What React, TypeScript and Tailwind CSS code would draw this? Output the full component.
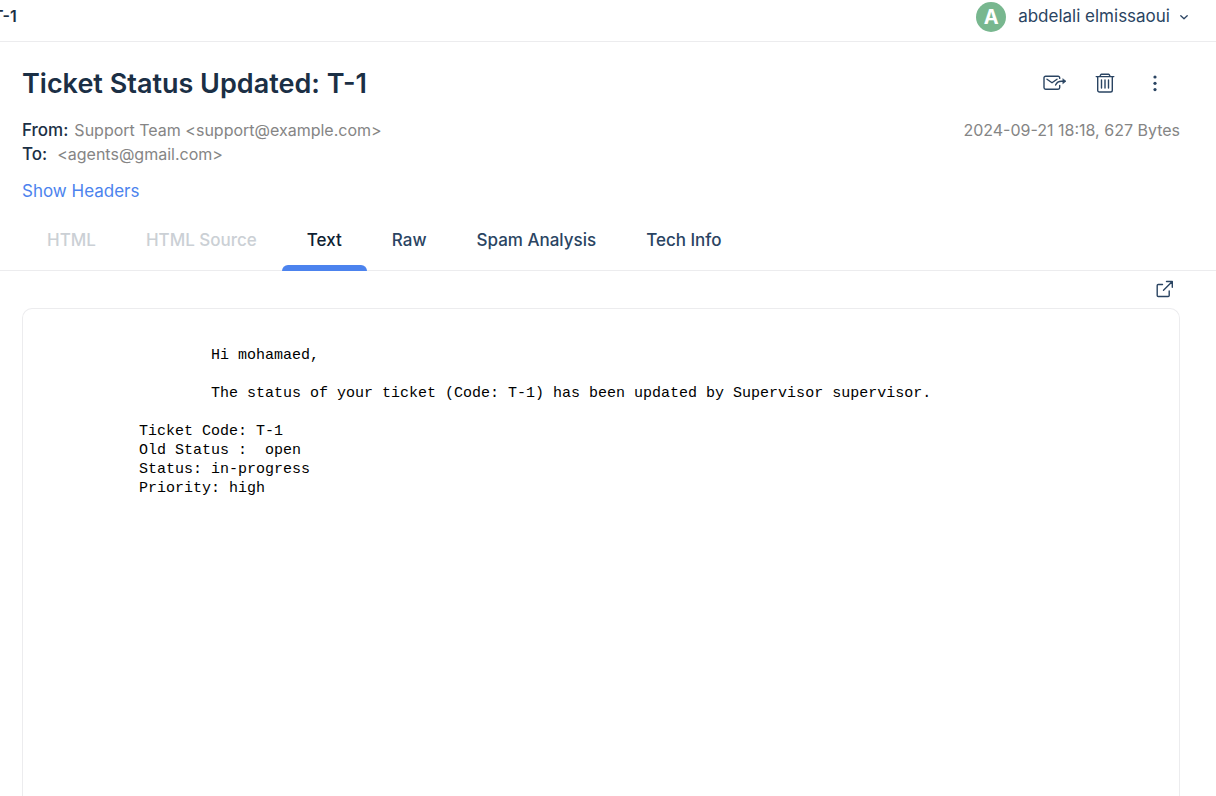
import type { ReactNode } from "react";

const tabs = [
  { name: "HTML", disabled: true },
  { name: "HTML Source", disabled: true },
  { name: "Text", active: true },
  { name: "Raw" },
  { name: "Spam Analysis" },
  { name: "Tech Info" },
];

const body = `
                    Hi mohamaed,

                    The status of your ticket (Code: T-1) has been updated by Supervisor supervisor.

            Ticket Code: T-1
            Old Status :  open
            Status: in-progress
            Priority: high
`;

function IconButton({ label, children }: { label: string; children: ReactNode }) {
  return (
    <button type="button" aria-label={label} className="flex items-center justify-center text-[#2a4462]">
      {children}
    </button>
  );
}

function ForwardIcon() {
  return (
    <svg width="24" height="16" viewBox="0 0 24 16" fill="none" stroke="currentColor" strokeWidth="1.4" strokeLinecap="round" strokeLinejoin="round">
      <path d="M16.7 3.4v-.6a1.6 1.6 0 0 0-1.6-1.6H2.6A1.6 1.6 0 0 0 1 2.8v9.8a1.6 1.6 0 0 0 1.6 1.6h12.5a1.6 1.6 0 0 0 1.6-1.6v-2.2" />
      <path d="M4 4.2 9 7.8l5-3.6" />
      <path d="M12.6 10c1-2.6 2.9-3.8 6-3.8h3" />
      <path d="m20 3.9 3 2.3-3 2.3z" fill="currentColor" strokeWidth="0.6" />
    </svg>
  );
}

function TrashIcon() {
  return (
    <svg width="20" height="20" viewBox="0 0 20 20" fill="none" stroke="currentColor" strokeWidth="1.4" strokeLinecap="round" strokeLinejoin="round">
      <path d="M1.2 3.6h17.6" />
      <path d="M5 3.2 5.8 1.6a.8.8 0 0 1 .7-.4h7a.8.8 0 0 1 .7.4l.8 1.6" />
      <path d="M2.7 3.6v13.6a1.8 1.8 0 0 0 1.8 1.8h11a1.8 1.8 0 0 0 1.8-1.8V3.6" />
      <path d="M6.5 7v8M10 7v8M13.5 7v8" />
    </svg>
  );
}

function MoreIcon() {
  return (
    <svg width="4" height="18" viewBox="0 0 4 18" fill="currentColor">
      <circle cx="2" cy="3" r="1.6" />
      <circle cx="2" cy="9.3" r="1.6" />
      <circle cx="2" cy="15.6" r="1.6" />
    </svg>
  );
}

function ExternalIcon() {
  return (
    <svg width="18" height="18" viewBox="0 0 18 18" fill="none" stroke="currentColor" strokeWidth="1.4" strokeLinecap="round" strokeLinejoin="round">
      <path d="M6.5 4.5H2.2a1 1 0 0 0-1 1v10a1 1 0 0 0 1 1h10a1 1 0 0 0 1-1V11" />
      <path d="M7.5 10.2 16 1.7M10.5 1.5h5.8v5.8" />
    </svg>
  );
}

export default function App() {
  return (
    <div className="flex h-screen flex-col overflow-hidden bg-white font-['Inter',sans-serif] text-[#1b2f45]">
      <header className="flex h-[42px] shrink-0 items-start justify-between border-b border-[#ececee] pr-7">
        <span className="-ml-[7px] pt-1 text-base font-semibold">T-1</span>
        <button type="button" className="flex items-center gap-3 pt-0.5 text-[#2a4462]">
          <span className="flex size-[30px] items-center justify-center rounded-full bg-[#78b78f] text-xl font-bold text-white">A</span>
          <span className="pb-0.5 text-[17px] leading-6">abdelali elmissaoui</span>
          <svg className="-ml-0.5" width="8" height="5" viewBox="0 0 8 5" fill="none" stroke="currentColor" strokeWidth="1.3" strokeLinecap="round" strokeLinejoin="round">
            <path d="m.8.8 3.2 3 3.2-3" />
          </svg>
        </button>
      </header>

      <section className="shrink-0 pr-9 pl-[22px]">
        <div className="flex items-center justify-between pt-6">
          <h1 className="text-[27px] leading-9 font-semibold">Ticket Status Updated: T-1</h1>
          <div className="flex items-center gap-7 pr-[23px] pb-0.5">
            <IconButton label="Forward"><ForwardIcon /></IconButton>
            <IconButton label="Delete"><TrashIcon /></IconButton>
            <span className="pl-2.5"><IconButton label="More"><MoreIcon /></IconButton></span>
          </div>
        </div>
        <div className="flex items-start justify-between pt-4">
          <dl className="text-base leading-6 text-[#858585]">
            <div className="flex gap-1.5">
              <dt className="text-[17px] font-medium text-[#1b2f45]">From:</dt>
              <dd>Support Team &lt;support@example.com&gt;</dd>
            </div>
            <div className="flex gap-2.5">
              <dt className="text-[17px] font-medium text-[#1b2f45]">To:</dt>
              <dd>&lt;agents@gmail.com&gt;</dd>
            </div>
          </dl>
          <p className="text-base leading-6 text-[#858585]">2024-09-21 18:18, 627 Bytes</p>
        </div>
        <a href="#headers" className="mt-[13px] inline-block text-[17px] leading-6 text-[#4c83ee]">Show Headers</a>
      </section>

      <nav className="mt-1 flex shrink-0 border-b border-[#ececee] pl-[22px]">
        {tabs.map((tab) => (
          <button
            key={tab.name}
            type="button"
            disabled={tab.disabled}
            className={
              tab.active
                ? "relative flex h-[63px] items-center px-[25px] pt-1 text-[17px] font-medium text-[#0f1f33]"
                : "flex h-[63px] items-center px-[25px] pt-1 text-[17px] font-medium text-[#2a4462] disabled:text-[#cbd0d5]"
            }
          >
            {tab.name}
            {tab.active && <span className="absolute inset-x-0 -bottom-px h-1.5 rounded-t-md bg-[#4c83ee]" />}
          </button>
        ))}
      </nav>

      <main className="flex min-h-0 grow flex-col pr-9 pl-[22px]">
        <div className="flex h-[37px] shrink-0 items-center justify-end pr-1.5 pb-0.5">
          <IconButton label="Open in new tab"><ExternalIcon /></IconButton>
        </div>
        <pre className="grow overflow-hidden rounded-t-[10px] border border-b-0 border-[#ececee] px-2 pt-[18px] font-['Liberation_Mono',monospace] text-[15px] leading-[19px] text-black">
          {body}
        </pre>
      </main>
    </div>
  );
}
